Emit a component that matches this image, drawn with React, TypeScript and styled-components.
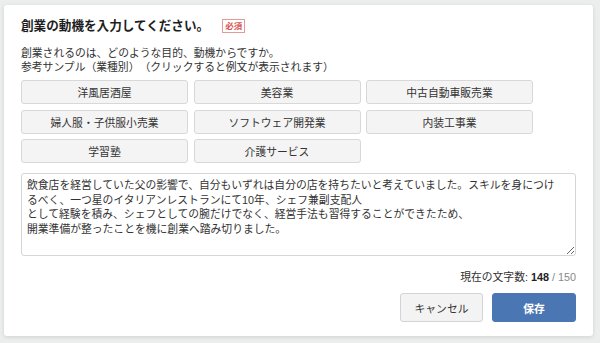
import React from "react";
import styled, { createGlobalStyle } from "styled-components";

const Global = createGlobalStyle`
  html, body { margin: 0; padding: 0; background: #eceeed; }
  body {
    font-family: "Liberation Sans", "Noto Sans CJK JP", sans-serif;
    color: #333;
    text-spacing-trim: space-all;
  }
  * { box-sizing: border-box; }
`;

const Page = styled.div`
  width: 600px;
  height: 343px;
  padding: 5px 7px 7px 4px;
`;

const Card = styled.div`
  width: 589px;
  height: 331px;
  background: #fff;
  border-radius: 3px;
  box-shadow: 0 1px 4px rgba(0, 0, 0, 0.12);
  padding: 13px 17px 14px 17px;
  display: flex;
  flex-direction: column;
`;

const TitleRow = styled.div`
  display: flex;
  align-items: center;
  height: 16px;
`;

const Title = styled.h2`
  margin: 0;
  font-size: 12.6px;
  font-weight: 700;
  color: #1e1e1e;
  line-height: 16px;
`;

const Badge = styled.span`
  margin-left: 13px;
  font-size: 8.5px;
  line-height: 12px;
  padding: 0 2px;
  color: #d9534f;
  border: 1px solid #e49a98;
  font-weight: 700;
`;

const Desc = styled.p`
  margin: 12px 0 0;
  font-size: 10.8px;
  line-height: 14px;
  color: #333;
`;

const Samples = styled.div`
  margin-top: 6px;
  display: grid;
  grid-template-columns: repeat(3, 167px);
  column-gap: 5.5px;
  row-gap: 5.5px;
`;

const SampleButton = styled.button`
  height: 24px;
  padding: 0;
  font-family: inherit;
  font-size: 10.8px;
  color: #333;
  background: #f4f4f4;
  border: 1px solid #d8d8d8;
  border-radius: 3px;
  cursor: pointer;
`;

const Area = styled.textarea`
  margin-top: 10px;
  width: 555px;
  height: 83px;
  padding: 4px 14px 4px 5px;
  font-family: inherit;
  font-size: 10.8px;
  line-height: 14.5px;
  color: #333;
  border: 1px solid #d6d6d6;
  border-radius: 3px;
  resize: vertical;
  outline: none;
`;

const Counter = styled.div`
  margin-top: 14px;
  text-align: right;
  font-size: 10.8px;
  line-height: 14px;
  color: #333;
`;

const Count = styled.span`
  font-weight: 700;
  color: #222;
`;

const Max = styled.span`
  color: #888;
`;

const Actions = styled.div`
  margin-top: 9px;
  display: flex;
  justify-content: flex-end;
  gap: 9px;
`;

const ActionButton = styled.button<{ $primary?: boolean }>`
  width: ${(p) => (p.$primary ? "84px" : "83px")};
  height: 29px;
  font-family: inherit;
  font-size: 10.8px;
  font-weight: ${(p) => (p.$primary ? 700 : 400)};
  color: ${(p) => (p.$primary ? "#fff" : "#333")};
  background: ${(p) => (p.$primary ? "#4a77b4" : "#f3f3f3")};
  border: 1px solid ${(p) => (p.$primary ? "#4a77b4" : "#d3d3d3")};
  border-radius: 3px;
  cursor: pointer;
`;

const samples = [
  "洋風居酒屋",
  "美容業",
  "中古自動車販売業",
  "婦人服・子供服小売業",
  "ソフトウェア開発業",
  "内装工事業",
  "学習塾",
  "介護サービス",
];

const text =
  "飲食店を経営していた父の影響で、自分もいずれは自分の店を持ちたいと考えていました。スキルを身につけるべく、一つ星のイタリアンレストランにて10年、シェフ兼副支配人\nとして経験を積み、シェフとしての腕だけでなく、経営手法も習得することができたため、\n開業準備が整ったことを機に創業へ踏み切りました。";

export default function App() {
  return (
    <Page>
      <Global />
      <Card>
        <TitleRow>
          <Title>創業の動機を入力してください。</Title>
          <Badge>必須</Badge>
        </TitleRow>
        <Desc>
          創業されるのは、どのような目的、動機からですか。
          <br />
          参考サンプル（業種別）（クリックすると例文が表示されます）
        </Desc>
        <Samples>
          {samples.map((s) => (
            <SampleButton key={s} type="button">
              {s}
            </SampleButton>
          ))}
        </Samples>
        <Area defaultValue={text} />
        <Counter>
          現在の文字数: <Count>148</Count> <Max>/ 150</Max>
        </Counter>
        <Actions>
          <ActionButton type="button">キャンセル</ActionButton>
          <ActionButton type="button" $primary>
            保存
          </ActionButton>
        </Actions>
      </Card>
    </Page>
  );
}
